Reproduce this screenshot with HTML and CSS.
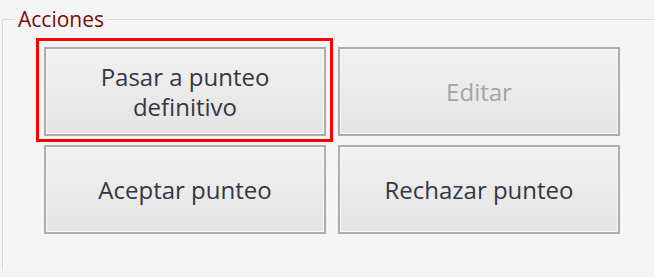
FILE: index.html
```html
<!DOCTYPE html>
<html>

<head>
  <title>Acciones</title>
  <link rel="stylesheet" href="styles.css">
</head>

<body>
  <fieldset class="group">
    <legend class="group-title">Acciones</legend>
    <div class="actions">
      <div class="action-cell">
        <button class="action-btn">Pasar a punteo<br>definitivo</button>
        <!-- highlight marker drawn over the button -->
        <span class="highlight"></span>
      </div>
      <div class="action-cell">
        <button class="action-btn" disabled>Editar</button>
      </div>
      <div class="action-cell">
        <button class="action-btn">Aceptar punteo</button>
      </div>
      <div class="action-cell">
        <button class="action-btn">Rechazar punteo</button>
      </div>
    </div>
  </fieldset>
</body>

</html>
```

FILE: styles.css
```css
html,
body {
  margin: 0;
  padding: 0;
  height: 100%;
  overflow: hidden;
}

body {
  background-color: #f4f4f4;
  font-family: "Open Sans", Arial, sans-serif;
}

/* group box is cut by the window on the right and bottom */
.group {
  margin: 7px 0 0 2px;
  padding: 16px 0 36px 41px;
  border: 1px solid #d9d9d9;
  border-right: none;
  border-bottom: none;
  box-shadow: inset 1px 1px 0 #fbfbfb;
}

.group-title {
  margin-left: -29px;
  padding: 0 3px;
  font-size: 21px;
  line-height: 24px;
  color: #7a0a0a;
}

.actions {
  display: grid;
  grid-template-columns: 282px 282px;
  grid-auto-rows: 89px;
  column-gap: 12px;
  row-gap: 9px;
}

.action-cell {
  position: relative;
  display: flex;
}

/* Windows style button */
.action-btn {
  width: 100%;
  margin: 0;
  padding: 0 8px;
  font-family: "Open Sans", Arial, sans-serif;
  font-size: 24px;
  line-height: 30px;
  color: #363646;
  background: linear-gradient(#f1f1f1, #e4e4e4);
  border: 2px solid #adadad;
  border-radius: 0;
  box-shadow: inset 0 0 0 1px #f7f7f7;
}

.action-btn:disabled {
  color: #a3a3ab;
}

.highlight {
  position: absolute;
  top: -9px;
  left: -8px;
  right: -7px;
  bottom: -6px;
  border: 3px solid #ff0000;
  pointer-events: none;
}
```
